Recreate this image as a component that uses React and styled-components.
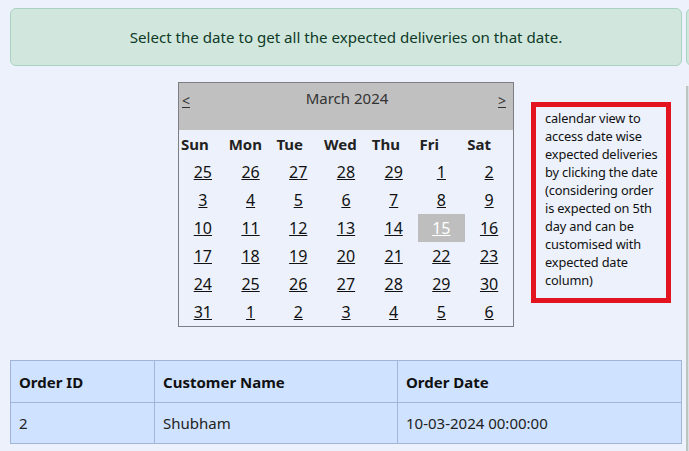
import React, { useState } from "react";
import styled, { createGlobalStyle } from "styled-components";

const GlobalStyle = createGlobalStyle`
  html, body {
    margin: 0;
    padding: 0;
    background: #edf1fc;
    overflow: hidden;
  }
  body {
    font-family: "Noto Sans", "Open Sans", sans-serif;
    color: #212529;
  }
`;

const WEEKDAYS = ["Sun", "Mon", "Tue", "Wed", "Thu", "Fri", "Sat"];

const buildWeeks = () => {
  const days = [25, 26, 27, 28, 29];
  for (let d = 1; d <= 31; d++) days.push(d);
  for (let d = 1; d <= 6; d++) days.push(d);
  const weeks = [];
  for (let i = 0; i < days.length; i += 7) weeks.push(days.slice(i, i + 7));
  return weeks;
};

export default function App() {
  const [selected, setSelected] = useState(15);
  const weeks = buildWeeks();

  return (
    <>
      <GlobalStyle />
      <Page>
        <Main>
          <Alert>Select the date to get all the expected deliveries on that date.</Alert>
          <CalendarRow>
            <Calendar>
              <CalHeader>
                <NavLink href="#">&lt;</NavLink>
                <MonthTitle>March 2024</MonthTitle>
                <NavLink href="#">&gt;</NavLink>
              </CalHeader>
              <Grid>
                <thead>
                  <tr>
                    {WEEKDAYS.map((d) => (
                      <DayName key={d}>{d}</DayName>
                    ))}
                  </tr>
                </thead>
                <tbody>
                  {weeks.map((week, wi) => (
                    <tr key={wi}>
                      {week.map((day, di) => {
                        const inMonth = !(wi === 0 && day > 20) && !(wi === weeks.length - 1 && day < 10);
                        const active = inMonth && day === selected;
                        return (
                          <DayCell key={di} $active={active}>
                            <DayLink
                              href="#"
                              $active={active}
                              onClick={(e) => {
                                e.preventDefault();
                                if (inMonth) setSelected(day);
                              }}
                            >
                              {day}
                            </DayLink>
                          </DayCell>
                        );
                      })}
                    </tr>
                  ))}
                </tbody>
              </Grid>
            </Calendar>
            <Note>
              calendar view to access date wise expected deliveries by clicking the date
              (considering order is expected on 5th day and can be customised with expected
              date column)
            </Note>
          </CalendarRow>
          <Table>
            <thead>
              <tr>
                <Th $w={144}>Order ID</Th>
                <Th $w={243}>Customer Name</Th>
                <Th>Order Date</Th>
              </tr>
            </thead>
            <tbody>
              <tr>
                <Td>2</Td>
                <Td>Shubham</Td>
                <Td>10-03-2024 00:00:00</Td>
              </tr>
            </tbody>
          </Table>
        </Main>
        <Side>
          <SideAlert />
          <SidePanel />
        </Side>
      </Page>
    </>
  );
}

const Page = styled.div`
  display: flex;
  gap: 4px;
  padding: 8px 0 0 10px;
  width: 900px;
`;

const Main = styled.div`
  width: 672px;
  flex-shrink: 0;
  display: flex;
  flex-direction: column;
`;

const Alert = styled.div`
  box-sizing: border-box;
  height: 58px;
  display: flex;
  align-items: center;
  justify-content: center;
  background: #d1e7dd;
  border: 1px solid #a9d3c0;
  border-radius: 6px;
  color: #0f3a27;
  font-size: 15.1px;
`;

const CalendarRow = styled.div`
  display: flex;
  align-items: flex-start;
  margin-top: 16px;
  padding-left: 168px;
`;

const Calendar = styled.div`
  box-sizing: border-box;
  width: 336px;
  border: 1px solid #7d7d85;
`;

const CalHeader = styled.div`
  box-sizing: border-box;
  display: flex;
  justify-content: space-between;
  align-items: flex-start;
  height: 47px;
  padding: 5px 7px 0 3px;
  background: #c0c0c0;
`;

const NavLink = styled.a`
  color: #333;
  font-size: 14px;
  margin-top: 3px;
  text-decoration: underline;
`;

const MonthTitle = styled.span`
  color: #333;
  font-size: 15px;
  margin-left: 6px;
`;

const Grid = styled.table`
  width: 100%;
  border-collapse: collapse;
  table-layout: fixed;
`;

const DayName = styled.th`
  height: 28px;
  text-align: left;
  padding: 0 0 0 2px;
  font-size: 15px;
  font-weight: 700;
  color: #222;
`;

const DayCell = styled.td`
  height: 28px;
  padding: 0;
  text-align: center;
  background: ${(p) => (p.$active ? "#bebebe" : "transparent")};
`;

const DayLink = styled.a`
  color: ${(p) => (p.$active ? "#ffffff" : "#111")};
  font-size: 16px;
  text-decoration: underline;
`;

const Note = styled.div`
  box-sizing: border-box;
  width: 140px;
  margin: 20px 0 0 17px;
  padding: 2px 4px 9px 9px;
  border: 5px solid #e3141f;
  font-size: 12.8px;
  letter-spacing: -0.15px;
  line-height: 18px;
  color: #111;
`;

const Table = styled.table`
  margin-top: 33px;
  width: 100%;
  border-collapse: collapse;
  background: #cfe2ff;
  font-size: 15px;
`;

const Th = styled.th`
  width: ${(p) => (p.$w ? `${p.$w}px` : "auto")};
  height: 42px;
  box-sizing: border-box;
  padding: 0 8px;
  text-align: left;
  font-weight: 700;
  border: 1px solid #a3b4d9;
  color: #111;
`;

const Td = styled.td`
  height: 40px;
  padding: 0 8px;
  border: 1px solid #a3b4d9;
  color: #222;
`;

const Side = styled.div`
  display: flex;
  flex-direction: column;
  gap: 20px;
  width: 200px;
`;

const SideAlert = styled.div`
  height: 58px;
  box-sizing: border-box;
  background: #d1e7dd;
  border: 1px solid #a9d3c0;
  border-radius: 6px;
`;

const SidePanel = styled.div`
  height: 400px;
  background: #dcdfe6;
  border-left: 2px solid #b9c7c0;
`;
